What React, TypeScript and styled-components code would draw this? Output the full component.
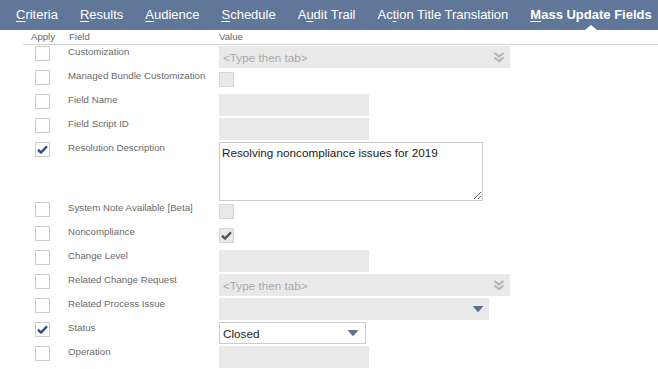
import React from "react";
import styled, { createGlobalStyle, css } from "styled-components";

type FieldKind = "lookup" | "checkbox" | "text" | "textarea" | "dropdown" | "status";

interface FieldRow {
  label: string;
  kind: FieldKind;
  applied?: boolean;
  checked?: boolean;
  width?: number;
  value?: string;
}

const tabs = [
  { key: "C", rest: "riteria" },
  { key: "R", rest: "esults" },
  { key: "A", rest: "udience" },
  { key: "S", rest: "chedule" },
  { pre: "A", key: "u", rest: "dit Trail" },
  { pre: "Ac", key: "t", rest: "ion Title Translation" },
  { key: "M", rest: "ass Update Fields", active: true },
];

const rows: FieldRow[] = [
  { label: "Customization", kind: "lookup", width: 291 },
  { label: "Managed Bundle Customization", kind: "checkbox" },
  { label: "Field Name", kind: "text" },
  { label: "Field Script ID", kind: "text" },
  {
    label: "Resolution Description",
    kind: "textarea",
    applied: true,
    value: "Resolving noncompliance issues for 2019",
  },
  { label: "System Note Available [Beta]", kind: "checkbox" },
  { label: "Noncompliance", kind: "checkbox", checked: true },
  { label: "Change Level", kind: "text" },
  { label: "Related Change Request", kind: "lookup", width: 291 },
  { label: "Related Process Issue", kind: "dropdown", width: 270 },
  { label: "Status", kind: "status", applied: true, value: "Closed" },
  { label: "Operation", kind: "text" },
];

const GlobalStyle = createGlobalStyle`
  body {
    margin: 0;
    background: #fff;
    font-family: "Liberation Sans", Arial, sans-serif;
  }
`;

const CheckMark = ({ color }: { color: string }) => (
  <svg width="11" height="9" viewBox="0 0 11 9">
    <path d="M1 4.6 L4 7.6 L10 1.2" fill="none" stroke={color} strokeWidth="2.4" strokeLinejoin="round" />
  </svg>
);

const DoubleChevron = () => (
  <svg width="12" height="11" viewBox="0 0 12 11">
    <path d="M1.5 1 L6 4.5 L10.5 1" fill="none" stroke="#b3b3b3" strokeWidth="2.2" />
    <path d="M1.5 5.5 L6 9 L10.5 5.5" fill="none" stroke="#b3b3b3" strokeWidth="2.2" />
  </svg>
);

const Caret = () => (
  <svg width="12" height="6" viewBox="0 0 12 6">
    <path d="M0.5 0 L11.5 0 L6.8 5.4 Q6 6 5.2 5.4 Z" fill="#5d7090" />
  </svg>
);

const renderValue = (row: FieldRow) => {
  switch (row.kind) {
    case "lookup":
      return (
        <GrayField $width={row.width}>
          <Placeholder>&lt;Type then tab&gt;</Placeholder>
          <IconSlot>
            <DoubleChevron />
          </IconSlot>
        </GrayField>
      );
    case "checkbox":
      return (
        <Box $disabled>{row.checked && <CheckMark color="#555" />}</Box>
      );
    case "textarea":
      return <TextArea defaultValue={row.value} />;
    case "dropdown":
      return (
        <GrayField $width={row.width}>
          <span />
          <IconSlot>
            <Caret />
          </IconSlot>
        </GrayField>
      );
    case "status":
      return (
        <SelectBox>
          <span>{row.value}</span>
          <IconSlot>
            <Caret />
          </IconSlot>
        </SelectBox>
      );
    default:
      return <GrayField $width={150} />;
  }
};

const App = () => {
  return (
    <>
      <GlobalStyle />
      <TabBar>
        {tabs.map((tab) => (
          <Tab key={tab.key + tab.rest} $active={tab.active}>
            {tab.pre}
            <u>{tab.key}</u>
            {tab.rest}
          </Tab>
        ))}
      </TabBar>
      <Table>
        <HeadRow>
          <HeadCell $indent={8}>Apply</HeadCell>
          <HeadCell $indent={1}>Field</HeadCell>
          <HeadCell>Value</HeadCell>
        </HeadRow>
        {rows.map((row) => (
          <Row key={row.label} $tall={row.kind === "textarea"}>
            <ApplyCell>
              <Box>{row.applied && <CheckMark color="#2f4f86" />}</Box>
            </ApplyCell>
            <Label>{row.label}</Label>
            <ValueCell>{renderValue(row)}</ValueCell>
          </Row>
        ))}
      </Table>
    </>
  );
};

const TabBar = styled.nav`
  display: flex;
  align-items: center;
  height: 30px;
  padding-left: 5px;
  background: #607799;
`;

const Tab = styled.span<{ $active?: boolean }>`
  position: relative;
  padding: 0 11px;
  color: #fff;
  font-size: 13px;
  line-height: 30px;
  white-space: nowrap;

  u {
    text-decoration-thickness: 1px;
    text-underline-offset: 2px;
  }

  ${({ $active }) =>
    $active &&
    css`
      font-weight: bold;
      &::after {
        content: "";
        position: absolute;
        left: 50%;
        bottom: 0;
        margin-left: -6px;
        border-left: 6px solid transparent;
        border-right: 6px solid transparent;
        border-bottom: 5px solid #fff;
      }
    `}
`;

const Table = styled.div`
  margin-left: 23px;
`;

const grid = css`
  display: grid;
  grid-template-columns: 45px 151px 1fr;
`;

const HeadRow = styled.div`
  ${grid};
  height: 14px;
  border-bottom: 1px solid #cfcfcf;
`;

const HeadCell = styled.div<{ $indent?: number }>`
  padding-left: ${({ $indent }) => $indent ?? 0}px;
  color: #666;
  font-size: 9.6px;
  line-height: 14px;
`;

const Row = styled.div<{ $tall?: boolean }>`
  ${grid};
  align-items: start;
  height: ${({ $tall }) => ($tall ? 60 : 24)}px;
`;

const ApplyCell = styled.div`
  padding: 1px 0 0 12px;
`;

const Box = styled.div<{ $disabled?: boolean }>`
  display: flex;
  align-items: center;
  justify-content: center;
  box-sizing: border-box;
  width: 15px;
  height: 15px;
  border: 1px solid ${({ $disabled }) => ($disabled ? "#d6d6d6" : "#cccccc")};
  background: ${({ $disabled }) => ($disabled ? "#e9e9e9" : "#fff")};
  margin-top: ${({ $disabled }) => ($disabled ? 2 : 0)}px;
`;

const Label = styled.div`
  padding-top: 1px;
  color: #6a6a6a;
  font-size: 9.7px;
  line-height: 12px;
  white-space: nowrap;
`;

const ValueCell = styled.div`
  padding-top: 1px;
`;

const fieldText = css`
  font-family: "Liberation Sans", Arial, sans-serif;
  font-size: 11.7px;
`;

const GrayField = styled.div<{ $width?: number }>`
  ${fieldText};
  display: flex;
  align-items: center;
  justify-content: space-between;
  box-sizing: border-box;
  width: ${({ $width }) => $width ?? 150}px;
  height: 22px;
  padding: 0 5px 0 4px;
  background: #e9e9e9;
`;

const Placeholder = styled.span`
  color: #a9a9a9;
`;

const IconSlot = styled.span`
  display: flex;
  align-items: center;
`;

const TextArea = styled.textarea`
  ${fieldText};
  display: block;
  box-sizing: border-box;
  width: 264px;
  height: 59px;
  margin: 0;
  padding: 3px 2px;
  border: 1px solid #cccccc;
  border-radius: 0;
  color: #222;
  resize: both;
  outline: none;
`;

const SelectBox = styled.div`
  ${fieldText};
  display: flex;
  align-items: center;
  justify-content: space-between;
  box-sizing: border-box;
  width: 147px;
  height: 22px;
  padding: 0 6px 0 3px;
  border: 1px solid #cccccc;
  color: #222;
`;

export default App;
